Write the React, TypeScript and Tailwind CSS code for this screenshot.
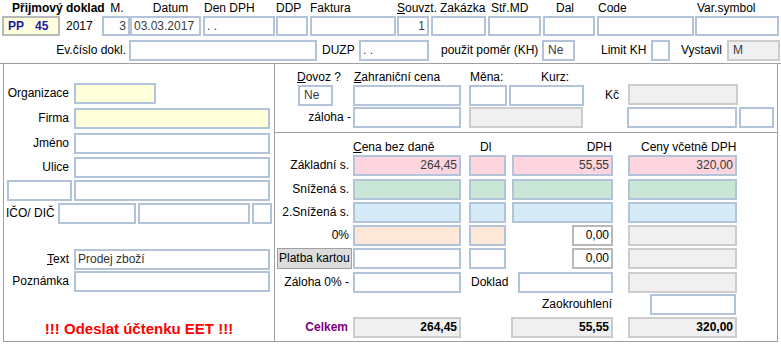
import React from 'react'
import clsx from 'clsx'
import { twMerge } from 'tailwind-merge'

type FieldProps = {
  w: string
  bg?: string
  border?: string
  v?: string
  right?: boolean
  bold?: boolean
  cls?: string
}

const cn = (...a: Parameters<typeof clsx>) => twMerge(clsx(...a))

// single input-like box
function F({ w, bg = 'bg-white', border = 'border-[#b2c3da]', v, right, bold, cls }: FieldProps) {
  return (
    <div
      className={cn(
        'h-[21px] shrink-0 border-2 px-[2px] leading-[17px] whitespace-nowrap overflow-hidden text-[#3a3a3a]',
        w,
        bg,
        border,
        right && 'text-right',
        bold && 'font-bold text-black',
        cls
      )}
    >
      {v}
    </div>
  )
}

const GRAY = 'bg-[#f0f0f0]'
const GRAYB = 'border-[#cccccc]'

const headCols = [
  { label: 'M.', ml: 'ml-[1px]', w: 'w-[28px]', lc: 'text-center pl-[2px]', v: '3', right: true },
  { label: 'Datum', ml: 'ml-0', w: 'w-[71px]', lc: 'text-center pl-[10px]', v: '03.03.2017' },
  { label: 'Den DPH', ml: 'ml-[2px]', w: 'w-[72px]', lc: 'pl-[1px]', v: ' .  .' },
  { label: 'DDP', ml: 'ml-[1px]', w: 'w-[32px]', lc: '', v: '' },
  { label: 'Faktura', ml: 'ml-[2px]', w: 'w-[86px]', lc: '', v: '' },
  { label: 'Souvzt.', ml: 'ml-[1px]', w: 'w-[32px]', lc: '', v: '1', right: true, u: true },
  { label: 'Zakázka', ml: 'ml-[2px]', w: 'w-[55px]', lc: 'pl-[9px]', v: '' },
  { label: 'Stř.MD', ml: 'ml-[2px]', w: 'w-[53px]', lc: 'pl-[3px]', v: '' },
  { label: 'Dal', ml: 'ml-[2px]', w: 'w-[52px]', lc: 'pl-[13px]', v: '' },
  { label: 'Code', ml: 'ml-[2px]', w: 'w-[97px]', lc: 'pl-[1px]', v: '' },
  { label: 'Var.symbol', ml: 'ml-[1px]', w: 'w-[84px]', lc: 'pl-[2px]', v: '' },
]

function Label({ children, cls }: { children: React.ReactNode; cls?: string }) {
  return <div className={cn('shrink-0 whitespace-nowrap leading-[21px]', cls)}>{children}</div>
}

export default function App() {
  return (
    <div className="w-[781px] h-[346px] overflow-hidden bg-white text-[12px] text-black font-['Liberation_Sans',Arial,sans-serif]">
      {/* Header */}
      <div className="h-[64px] border-b border-[#a0a0a0]">
        <div className="flex">
          <div className="ml-[2px] w-[99px] shrink-0">
            <div className="h-[16px] leading-[16px] pl-[10px] font-bold whitespace-nowrap">Přijmový doklad</div>
            <div className="flex items-center">
              <div className="h-[20px] w-[58px] border-2 border-[#b9b9b9] bg-[#ffffdd] pl-[4px] leading-[16px] font-bold text-[#1c1ca6]">
                PP<span className="ml-[11px]">45</span>
              </div>
              <span className="ml-[6px] leading-[20px]">2017</span>
            </div>
          </div>
          {headCols.map((c) => (
            <div key={c.label} className={clsx('shrink-0', c.ml, c.w)}>
              <div className={clsx('h-[16px] leading-[16px] whitespace-nowrap', c.lc)}>
                {c.u ? (
                  <>
                    <span className="underline">S</span>ouvzt.
                  </>
                ) : (
                  c.label
                )}
              </div>
              <F w={c.w} v={c.v} right={c.right} cls="h-[20px] leading-[16px]" />
            </div>
          ))}
        </div>

        <div className="mt-[4px] flex items-center">
          <Label cls="w-[126px] text-right">Ev.číslo dokl.</Label>
          <F w="w-[188px]" cls="ml-[3px]" />
          <Label cls="ml-[5px] w-[37px]">DUZP</Label>
          <F w="w-[70px]" v=" .  ." />
          <Label cls="ml-[12px] w-[101px]">použit poměr (KH)</Label>
          <F w="w-[33px]" v="Ne" cls="pl-[4px]" />
          <Label cls="ml-[26px] w-[50px]">Limit KH</Label>
          <F w="w-[19px]" />
          <Label cls="ml-[11px] w-[46px]">Vystavil</Label>
          <F w="w-[53px]" bg={GRAY} border={GRAYB} v="M" cls="pl-[4px]" />
        </div>
      </div>

      {/* Body */}
      <div className="flex h-[278px]">
        {/* Left panel */}
        <div className="ml-[3px] w-[272px] shrink-0 border-x border-b border-[#a0a0a0]">
          <div className="mt-[19px] flex">
            <Label cls="w-[65px] text-right">Organizace</Label>
            <F w="w-[82px]" bg="bg-[#ffffd9]" cls="ml-[5px]" />
          </div>
          <div className="mt-[4px] flex">
            <Label cls="w-[65px] text-right">Firma</Label>
            <F w="w-[196px]" bg="bg-[#ffffd9]" cls="ml-[5px]" />
          </div>
          <div className="mt-[4px] flex">
            <Label cls="w-[65px] text-right">Jméno</Label>
            <F w="w-[196px]" cls="ml-[5px]" />
          </div>
          <div className="mt-[3px] flex">
            <Label cls="w-[65px] text-right">Ulice</Label>
            <F w="w-[196px]" cls="ml-[5px]" />
          </div>
          <div className="mt-[2px] flex">
            <F w="w-[65px]" cls="ml-[3px]" />
            <F w="w-[196px]" cls="ml-[2px]" />
          </div>
          <div className="mt-[2px] flex">
            <Label cls="w-[54px] pl-[2px]">IČO/ DIČ</Label>
            <F w="w-[78px]" />
            <F w="w-[112px]" cls="ml-[2px]" />
            <F w="w-[20px]" cls="ml-[2px]" />
          </div>
          <div className="mt-[25px] flex">
            <Label cls="w-[65px] text-right">
              <span className="underline">T</span>ext
            </Label>
            <F w="w-[196px]" v="Prodej zboží" cls="ml-[5px] text-[#333]" />
          </div>
          <div className="mt-[1px] flex">
            <Label cls="w-[65px] text-right">Poznámka</Label>
            <F w="w-[196px]" cls="ml-[5px]" />
          </div>
          <div className="mt-[28px] text-center text-[15px] leading-[18px] font-bold text-[#ff0000]">
            !!! Odeslat účtenku EET !!!
          </div>
        </div>

        {/* Right column */}
        <div className="w-[503px] shrink-0 flex flex-col border-r border-b border-[#a0a0a0]">
          {/* Foreign price */}
          <div className="h-[69px] shrink-0 border-b border-[#a0a0a0]">
            <div className="mt-[6px] flex h-[15px] leading-[15px] whitespace-nowrap">
              <span className="ml-[22px] w-[57px] shrink-0">
                <span className="underline">D</span>ovoz ?
              </span>
              <span className="w-[116px] shrink-0">
                <span className="underline">Z</span>ahraniční cena
              </span>
              <span className="w-[71px] shrink-0">Měna:</span>
              <span>Kurz:</span>
            </div>
            <div className="flex">
              <F w="w-[35px]" v="Ne" cls="ml-[23px] pl-[4px]" />
              <F w="w-[108px]" cls="ml-[20px]" />
              <F w="w-[38px]" cls="ml-[8px]" />
              <F w="w-[75px]" cls="ml-[2px]" />
              <Label cls="ml-[21px] w-[23px]">Kč</Label>
              <F w="w-[110px]" bg={GRAY} border={GRAYB} cls="-mt-px" />
            </div>
            <div className="mt-[1px] flex">
              <Label cls="w-[76px] text-right">záloha -</Label>
              <F w="w-[108px]" cls="ml-[2px]" />
              <F w="w-[114px]" bg={GRAY} border={GRAYB} cls="ml-[8px]" />
              <F w="w-[110px]" cls="ml-[44px]" />
              <F w="w-[35px]" cls="ml-[2px]" />
            </div>
          </div>

          {/* VAT table */}
          <div className="flex-1">
            <div className="mt-[6px] flex h-[16px] leading-[16px] whitespace-nowrap">
              <span className="ml-[78px] w-[116px] shrink-0">
                <span className="underline">C</span>ena bez daně
              </span>
              <span className="w-[37px] shrink-0 pl-[11px]">Dl</span>
              <span className="w-[106px] shrink-0 text-right">DPH</span>
              <span className="ml-[29px]">Ceny včetně DPH</span>
            </div>

            <div className="flex">
              <Label cls="w-[74px] text-right">Základní s.</Label>
              <F w="w-[108px]" bg="bg-[#fcd5de]" v="264,45" right cls="ml-[4px]" />
              <F w="w-[37px]" bg="bg-[#fcd5de]" cls="ml-[8px]" />
              <F w="w-[101px]" bg="bg-[#fcd5de]" v="55,55" right cls="ml-[6px]" />
              <F w="w-[109px]" bg="bg-[#fcd5de]" v="320,00" right cls="ml-[15px]" />
            </div>
            <div className="mt-[3px] flex">
              <Label cls="w-[74px] text-right">Snížená s.</Label>
              <F w="w-[108px]" bg="bg-[#c9e6d7]" cls="ml-[4px]" />
              <F w="w-[37px]" bg="bg-[#c9e6d7]" cls="ml-[8px]" />
              <F w="w-[101px]" bg="bg-[#c9e6d7]" cls="ml-[6px]" />
              <F w="w-[109px]" bg="bg-[#c9e6d7]" cls="ml-[15px]" />
            </div>
            <div className="mt-[2px] flex">
              <Label cls="w-[74px] text-right">2.Snížená s.</Label>
              <F w="w-[108px]" bg="bg-[#d5ecf8]" cls="ml-[4px]" />
              <F w="w-[37px]" bg="bg-[#d5ecf8]" cls="ml-[8px]" />
              <F w="w-[101px]" bg="bg-[#d5ecf8]" cls="ml-[6px]" />
              <F w="w-[109px]" bg="bg-[#d5ecf8]" cls="ml-[15px]" />
            </div>
            <div className="mt-[2px] flex">
              <Label cls="w-[74px] text-right">0%</Label>
              <F w="w-[108px]" bg="bg-[#fde7d8]" cls="ml-[4px]" />
              <F w="w-[37px]" bg="bg-[#fde7d8]" cls="ml-[8px]" />
              <F w="w-[41px]" border="border-[#b9b9b9]" v="0,00" right cls="ml-[66px] text-black" />
              <F w="w-[109px]" bg={GRAY} border={GRAYB} cls="ml-[15px]" />
            </div>
            <div className="mt-[2px] flex">
              <div className="ml-[2px] h-[21px] w-[75px] shrink-0 border border-[#a0a0a0] bg-[#dcdcdc] pl-[1px] leading-[19px] whitespace-nowrap">
                Platba kartou
              </div>
              <F w="w-[108px]" cls="ml-[1px]" />
              <F w="w-[37px]" cls="ml-[8px]" />
              <F w="w-[41px]" border="border-[#b9b9b9]" v="0,00" right cls="ml-[66px] text-black" />
              <F w="w-[109px]" bg={GRAY} border={GRAYB} cls="ml-[15px]" />
            </div>
            <div className="mt-[3px] flex">
              <Label cls="w-[74px] text-right">Záloha 0% -</Label>
              <F w="w-[108px]" cls="ml-[4px]" />
              <Label cls="ml-[10px] w-[47px]">Doklad</Label>
              <F w="w-[95px]" />
              <F w="w-[109px]" bg={GRAY} border={GRAYB} cls="ml-[15px]" />
            </div>
            <div className="mt-[1px] flex">
              <Label cls="w-[337px] text-right">Zaokrouhlení</Label>
              <F w="w-[86px]" cls="ml-[38px]" />
            </div>
            <div className="mt-[2px] flex">
              <Label cls="w-[73px] text-right font-bold text-[#800080]">Celkem</Label>
              <F w="w-[108px]" bg={GRAY} border={GRAYB} v="264,45" right bold cls="ml-[5px]" />
              <F w="w-[102px]" bg={GRAY} border={GRAYB} v="55,55" right bold cls="ml-[50px]" />
              <F w="w-[109px]" bg={GRAY} border={GRAYB} v="320,00" right bold cls="ml-[15px]" />
            </div>
          </div>
        </div>
      </div>
    </div>
  )
}
